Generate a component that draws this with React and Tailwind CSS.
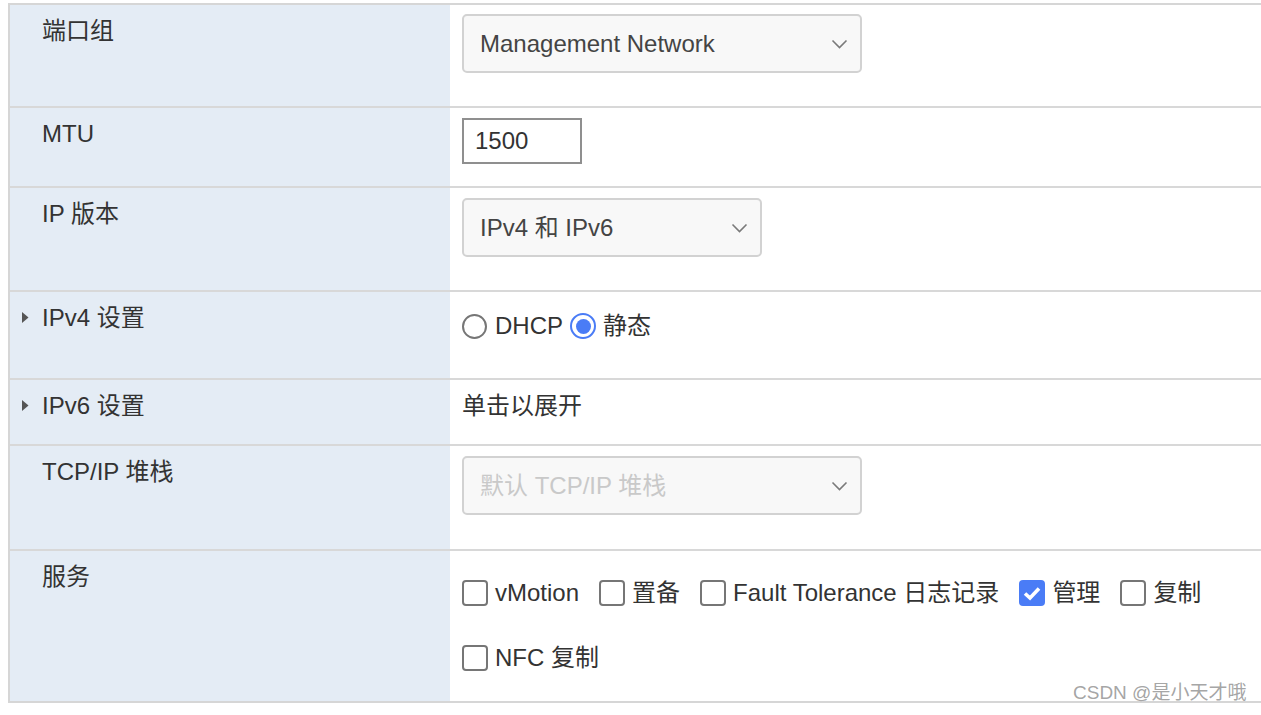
const font = { fontFamily: '"Liberation Sans", Arial, "Noto Sans CJK SC", sans-serif' };

function Chevron() {
  return (
    <svg width="17" height="10" viewBox="0 0 17 10" className="shrink-0">
      <polyline points="1.5,1.5 8.5,8.5 15.5,1.5" fill="none" stroke="#7a7a7a" strokeWidth="1.6" />
    </svg>
  );
}

function Select({ value, width, disabled }) {
  return (
    <div
      className={`flex items-center justify-between h-[59px] rounded-[5px] border-2 border-[#d2d2d2] bg-[#f8f8f8] pl-4 pr-[12px] ${width}`}
    >
      <span className={disabled ? "text-[#c9c9c9]" : "text-[#444]"}>{value}</span>
      <Chevron />
    </div>
  );
}

function Radio({ checked }) {
  if (checked) {
    return (
      <span className="inline-flex items-center justify-center w-[26px] h-[26px] rounded-full border-[2.5px] border-[#4a7cf6] bg-white">
        <span className="w-[15px] h-[15px] rounded-full bg-[#4a7cf6]" />
      </span>
    );
  }
  return <span className="inline-block w-[25px] h-[25px] rounded-full border-2 border-[#767676] bg-white" />;
}

function Checkbox({ checked }) {
  if (checked) {
    return (
      <span className="inline-flex items-center justify-center w-[26px] h-[26px] rounded-[4px] bg-[#4a7cf6]">
        <svg width="18" height="15" viewBox="0 0 18 15">
          <polyline points="2,7.5 7,12 16,2.5" fill="none" stroke="#fff" strokeWidth="3.6" />
        </svg>
      </span>
    );
  }
  return <span className="inline-block w-[26px] h-[26px] rounded-[4px] border-2 border-[#767676] bg-white" />;
}

function Triangle() {
  return (
    <svg width="7" height="11" viewBox="0 0 7 11" className="absolute left-[12px] top-[20px]">
      <polygon points="0,0 6.5,5.5 0,11" fill="#555" />
    </svg>
  );
}

function Row({ label, height, first, expandable, children }) {
  return (
    <div className={`grid grid-cols-[440px_1fr] ${first ? "" : "border-t-2 border-[#d8d8d8]"} ${height}`}>
      <div className="relative bg-[#e4ecf5] pl-[32px] pt-[12px]">
        {expandable && <Triangle />}
        <span>{label}</span>
      </div>
      <div className="pl-[12px]">{children}</div>
    </div>
  );
}

const services = [
  { name: "vMotion", checked: false },
  { name: "置备", checked: false },
  { name: "Fault Tolerance 日志记录", checked: false },
  { name: "管理", checked: true },
  { name: "复制", checked: false },
];

export default function App() {
  return (
    <div className="relative w-[1261px] h-[715px] bg-white pt-[3px] pl-[8px] text-[24px] leading-[28px] text-[#333]" style={font}>
      <div className="border-l-2 border-t-2 border-b-2 border-[#d6d6d6]">
        <Row label="端口组" height="h-[101px]" first>
          <div className="pt-[9px]">
            <Select value="Management Network" width="w-[400px]" />
          </div>
        </Row>
        <Row label="MTU" height="h-[80px]">
          <div className="pt-[10px]">
            <div className="w-[120px] h-[46px] border-2 border-[#8f8f8f] pl-[11px] flex items-center text-[#333]">1500</div>
          </div>
        </Row>
        <Row label="IP 版本" height="h-[104px]">
          <div className="pt-[10px]">
            <Select value="IPv4 和 IPv6" width="w-[300px]" />
          </div>
        </Row>
        <Row label="IPv4 设置" height="h-[88px]" expandable>
          <div className="pt-[20px] flex items-center">
            <Radio />
            <span className="ml-[8px]">DHCP</span>
            <span className="ml-[7px] inline-flex"><Radio checked /></span>
            <span className="ml-[7px]">静态</span>
          </div>
        </Row>
        <Row label="IPv6 设置" height="h-[66px]" expandable>
          <div className="pt-[12px]">单击以展开</div>
        </Row>
        <Row label="TCP/IP 堆栈" height="h-[105px]">
          <div className="pt-[10px]">
            <Select value="默认 TCP/IP 堆栈" width="w-[400px]" disabled />
          </div>
        </Row>
        <Row label="服务" height="h-[152px]">
          <div className="pt-[28px] flex flex-col gap-[37px]">
            <div className="flex items-center gap-[20px]">
              {services.map((s) => (
                <label key={s.name} className="flex items-center gap-[7px]">
                  <Checkbox checked={s.checked} />
                  <span>{s.name}</span>
                </label>
              ))}
            </div>
            <div className="flex items-center gap-[7px]">
              <Checkbox />
              <span>NFC 复制</span>
            </div>
          </div>
        </Row>
      </div>
      <div className="absolute left-[1073px] top-[682px] text-[19px] leading-[22px] text-[#9a9a9a]/90">CSDN @是小天才哦</div>
    </div>
  );
}
